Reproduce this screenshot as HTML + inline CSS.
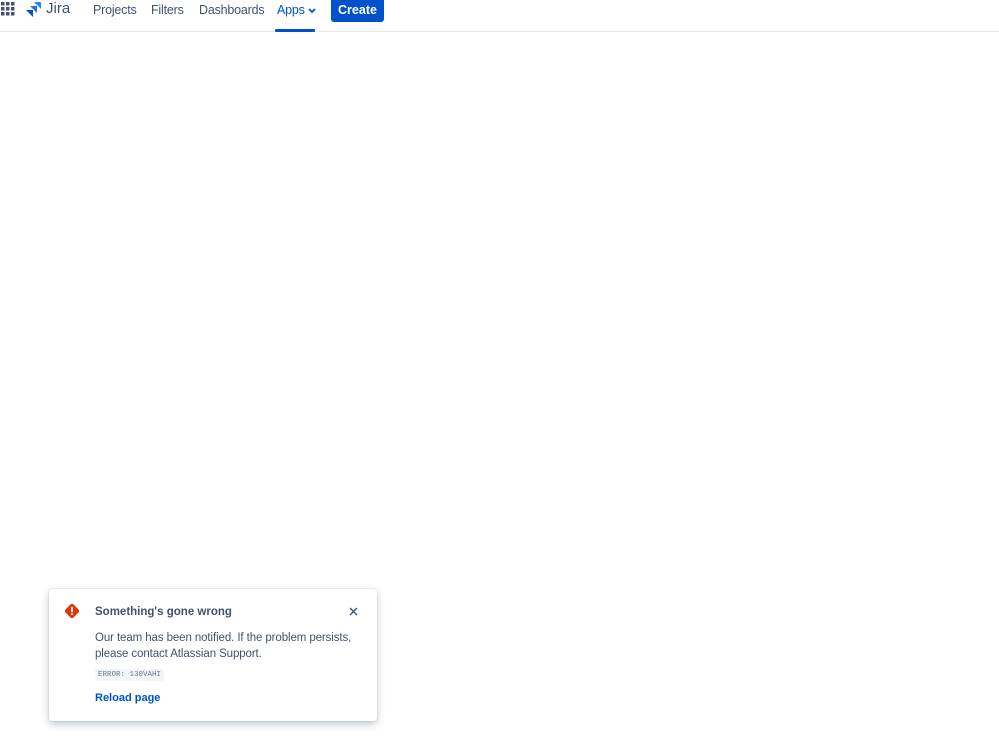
<!DOCTYPE html>
<html><head><meta charset="utf-8"><style>
*{margin:0;padding:0;box-sizing:border-box}
body{width:999px;height:746px;background:#fff;font-family:"Liberation Sans",sans-serif;position:relative;overflow:hidden}
.nav{position:absolute;left:0;top:0;width:999px;height:32px;border-bottom:1px solid #e6e8ec}
.nav a{position:absolute;top:3px;font-size:12.5px;letter-spacing:-0.2px;color:#42526e;text-decoration:none}
.create{position:absolute;left:331px;top:-2px;width:53px;height:24px;background:#0052cc;color:#fff;border-radius:3px;font-size:12.5px;font-weight:bold;text-align:center;line-height:24px}
.uline{position:absolute;left:275px;top:29px;width:40px;height:3px;background:#0052cc;border-radius:1px}
.card{position:absolute;left:49px;top:589px;width:328px;height:132px;background:#fff;border-radius:3px;box-shadow:0 3px 8px rgba(9,30,66,.25),0 0 1px rgba(9,30,66,.31)}
.t{position:absolute;left:46px;top:17px;font-size:11.5px;font-weight:bold;color:#42526e}
.b{position:absolute;left:46px;top:41px;font-size:11.5px;line-height:16px;color:#42526e;width:275px;letter-spacing:-0.1px}
.code{position:absolute;left:46px;top:80px;background:#f4f5f7;font-family:"Liberation Mono",monospace;font-size:7.5px;color:#6b778c;padding:2px 3px;border-radius:2px}
.r{position:absolute;left:46px;top:103px;font-size:11px;font-weight:bold;color:#0052cc}
</style></head><body>
<div class="nav">
<svg style="position:absolute;left:1px;top:2px" width="14" height="14" viewBox="0 0 14 14" fill="#42526e">
<rect x="0" y="0" width="3.5" height="3.5"/><rect x="5" y="0" width="3.5" height="3.5"/><rect x="10" y="0" width="3.5" height="3.5"/>
<rect x="0" y="5" width="3.5" height="3.5"/><rect x="5" y="5" width="3.5" height="3.5"/><rect x="10" y="5" width="3.5" height="3.5"/>
<rect x="0" y="10" width="3.5" height="3.5"/><rect x="5" y="10" width="3.5" height="3.5"/><rect x="10" y="10" width="3.5" height="3.5"/></svg>
<svg style="position:absolute;left:26px;top:1px" width="16" height="16" viewBox="0 0 16 16">
<path d="M8 1h7v7l-3-3z" fill="#2684ff"/><path d="M4 5h7v7l-3-3z" fill="#1e74e6"/><path d="M0 9h7v7l-3-3z" fill="#0052cc"/></svg>
<span style="position:absolute;left:46px;top:0px;font-size:15px;color:#42526e">Jira</span>
<a style="left:93px">Projects</a>
<a style="left:151px">Filters</a>
<a style="left:199px">Dashboards</a>
<a style="left:277px;color:#0052cc">Apps <svg width="8" height="6" viewBox="0 0 8 6"><path d="M1 1l3 3 3-3" stroke="#0052cc" stroke-width="1.8" fill="none"/></svg></a>
<div class="uline"></div>
<div class="create">Create</div>
</div>
<div class="card">
<svg style="position:absolute;left:16px;top:15px" width="14" height="14" viewBox="0 0 14 14"><path d="M7 0l7 7-7 7-7-7z" fill="#de350b" stroke="#de350b" stroke-linejoin="round" stroke-width="1.5"/><rect x="6.1" y="3" width="1.8" height="5" fill="#fff"/><rect x="6.1" y="9.2" width="1.8" height="1.8" fill="#fff"/></svg>
<div class="t">Something's gone wrong</div>
<svg style="position:absolute;left:300px;top:18px" width="9" height="9" viewBox="0 0 9 9"><path d="M1 1l7 7M8 1l-7 7" stroke="#42526e" stroke-width="1.4"/></svg>
<div class="b">Our team has been notified. If the problem persists, please contact Atlassian Support.</div>
<div class="code">ERROR: 130VAHI</div>
<div class="r">Reload page</div>
</div>
</body></html>
